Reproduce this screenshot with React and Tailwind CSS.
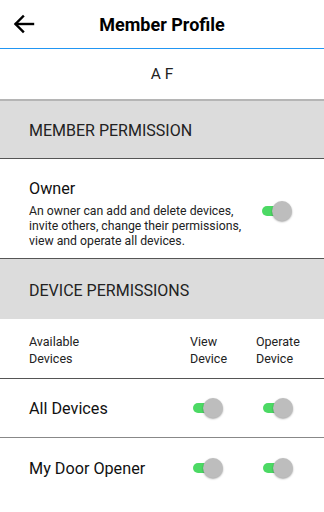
import React, { useState } from 'react';

const Toggle = ({ on = true }) => (
  <div className="relative w-[30px] h-[20px]">
    <div className={`absolute left-0 top-[5px] w-[24px] h-[10px] rounded-full ${on ? 'bg-[#4cd964]' : 'bg-[#ccc]'}`} />
    <div className="absolute right-0 top-0 w-[20px] h-[20px] rounded-full bg-[#bdbdbd] shadow-[0_1px_2px_rgba(0,0,0,0.35)]" />
  </div>
);

const SectionTitle = ({ children, topBorder }) => (
  <div className={`h-[60px] bg-[#dcdcdc] flex items-center pl-[29px] pt-[3px] text-[16px] text-[#222] ${topBorder}`}>
    {children}
  </div>
);

const DeviceRow = ({ name, border }) => (
  <div className={`h-[59px] flex items-center ${border}`}>
    <div className="flex-1 pl-[29px] pt-[3px] text-[16.2px] text-[#111]">{name}</div>
    <div className="w-[66px] pl-[3px]"><Toggle /></div>
    <div className="w-[68px] pl-[7px]"><Toggle /></div>
  </div>
);

export default function App() {
  const [devices] = useState(['All Devices', 'My Door Opener']);

  return (
    <div className="w-[324px] h-[512px] bg-white overflow-hidden font-['Roboto',sans-serif]">
      {/* Header */}
      <div className="relative h-[49px] border-b-[1.5px] border-[#2196f3] flex items-center justify-center">
        <svg className="absolute left-[13px] top-[14px]" width="22" height="20" viewBox="0 0 22 20" fill="none" stroke="#000" strokeWidth="2.4" strokeLinecap="square">
          <path d="M20 10H3" />
          <path d="M10 2.5L2.5 10L10 17.5" />
        </svg>
        <div className="text-[18px] font-bold text-black pt-[1px]">Member Profile</div>
      </div>

      {/* Name */}
      <div className="h-[50px] flex items-center justify-center pt-[2px] text-[15.5px] text-[#222]">A F</div>

      <SectionTitle topBorder="border-t-2 border-[#b5b5b5] border-b border-b-[#555]">MEMBER PERMISSION</SectionTitle>

      {/* Owner */}
      <div className="h-[100px] flex items-center pl-[29px] pr-[32px] border-b border-[#555]">
        <div className="flex-1 pt-[10px]">
          <div className="text-[16.2px] text-[#111] leading-[20px] mb-[5px]">Owner</div>
          <div className="text-[12.25px] leading-[15px] text-[#222] whitespace-nowrap">
            An owner can add and delete devices,<br />
            invite others, change their permissions,<br />
            view and operate all devices.
          </div>
        </div>
        <div className="mt-[4px]"><Toggle /></div>
      </div>

      <SectionTitle topBorder="">DEVICE PERMISSIONS</SectionTitle>

      {/* Column headings */}
      <div className="h-[60px] flex items-center pt-[2px] border-b border-[#555] text-[12.5px] leading-[17px] text-[#222]">
        <div className="flex-1 pl-[29px]">Available<br />Devices</div>
        <div className="w-[66px]">View<br />Device</div>
        <div className="w-[68px]">Operate<br />Device</div>
      </div>

      {devices.map((d, i) => (
        <DeviceRow key={d} name={d} border={i === 0 ? 'border-b border-[#888]' : ''} />
      ))}
    </div>
  );
}
